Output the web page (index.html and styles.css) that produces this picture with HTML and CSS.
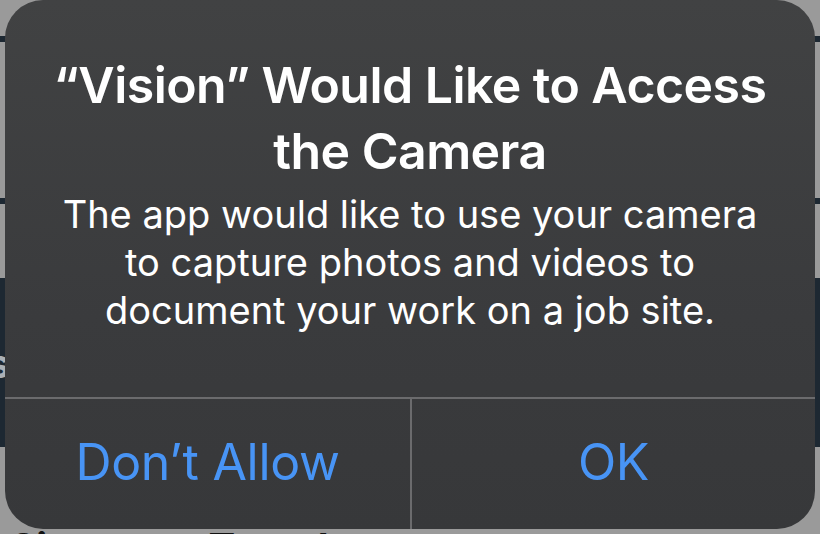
FILE: index.html
```html
<!DOCTYPE html>
<html lang="en">
<head>
<meta charset="utf-8">
<title>Camera Access</title>
<link rel="stylesheet" href="styles.css">
</head>
<body>
<div class="app">
  <div class="stripe stripe-a"></div>
  <div class="stripe stripe-b"></div>
  <div class="panel"><span class="panel-s">s</span></div>
  <div class="footer-text">Signature Template</div>
</div>
<div class="alert" role="alertdialog">
  <div class="alert-body">
    <h1 class="alert-title">“Vision” Would Like to Access<br>the Camera</h1>
    <p class="alert-message">The app would like to use your camera<br>to capture photos and videos to<br>document your work on a job site.</p>
  </div>
  <div class="alert-actions">
    <button class="alert-btn">Don’t Allow</button>
    <button class="alert-btn">OK</button>
  </div>
</div>
</body>
</html>
```

FILE: styles.css
```css
html, body {
  margin: 0;
  padding: 0;
}
body {
  width: 820px;
  height: 534px;
  background: #9a9a9a;
  overflow: hidden;
  position: relative;
  font-family: Inter, "Noto Sans", "Liberation Sans", sans-serif;
}
.app {
  display: flex;
  flex-direction: column;
  height: 534px;
  overflow: hidden;
}
.app > * {
  flex-shrink: 0;
}
.stripe {
  background: #1d2832;
  height: 6px;
}
.stripe-a {
  margin-top: 36px;
}
.stripe-b {
  margin-top: 156px;
}
.panel {
  margin-top: 74px;
  height: 169px;
  background: #1d2832;
  position: relative;
}
.panel-s {
  position: absolute;
  left: -12px;
  top: 66px;
  color: #aab0b5;
  font-weight: 700;
  font-size: 40px;
  line-height: 40px;
}
.footer-text {
  margin-top: 81px;
  padding-left: 10px;
  color: #111;
  font-weight: 700;
  font-size: 40px;
  line-height: 40px;
}
.alert {
  position: absolute;
  left: 5px;
  top: 0;
  width: 810px;
  height: 529px;
  border-radius: 38px;
  background: linear-gradient(180deg, #414243 0%, #3a3b3d 60%, #37383a 100%);
  display: flex;
  flex-direction: column;
  overflow: hidden;
  color: #fff;
}
.alert-body {
  padding: 52px 30px 63px;
  text-align: center;
}
.alert-title {
  margin: 0 0 6px;
  font-size: 50px;
  line-height: 66px;
  font-weight: 600;
  letter-spacing: -0.55px;
}
.alert-message {
  margin: 0;
  font-size: 38px;
  line-height: 48px;
  font-weight: 400;
}
.alert-actions {
  flex: 1;
  display: grid;
  grid-template-columns: 1fr 1fr;
  border-top: 2px solid #6b6b6d;
}
.alert-btn {
  background: none;
  border: 0;
  margin: 0;
  padding: 0 0 4px;
  font-family: inherit;
  font-size: 50px;
  font-weight: 400;
  letter-spacing: -0.3px;
  color: #4894f5;
}
.alert-btn + .alert-btn {
  border-left: 2px solid #6b6b6d;
}
```
